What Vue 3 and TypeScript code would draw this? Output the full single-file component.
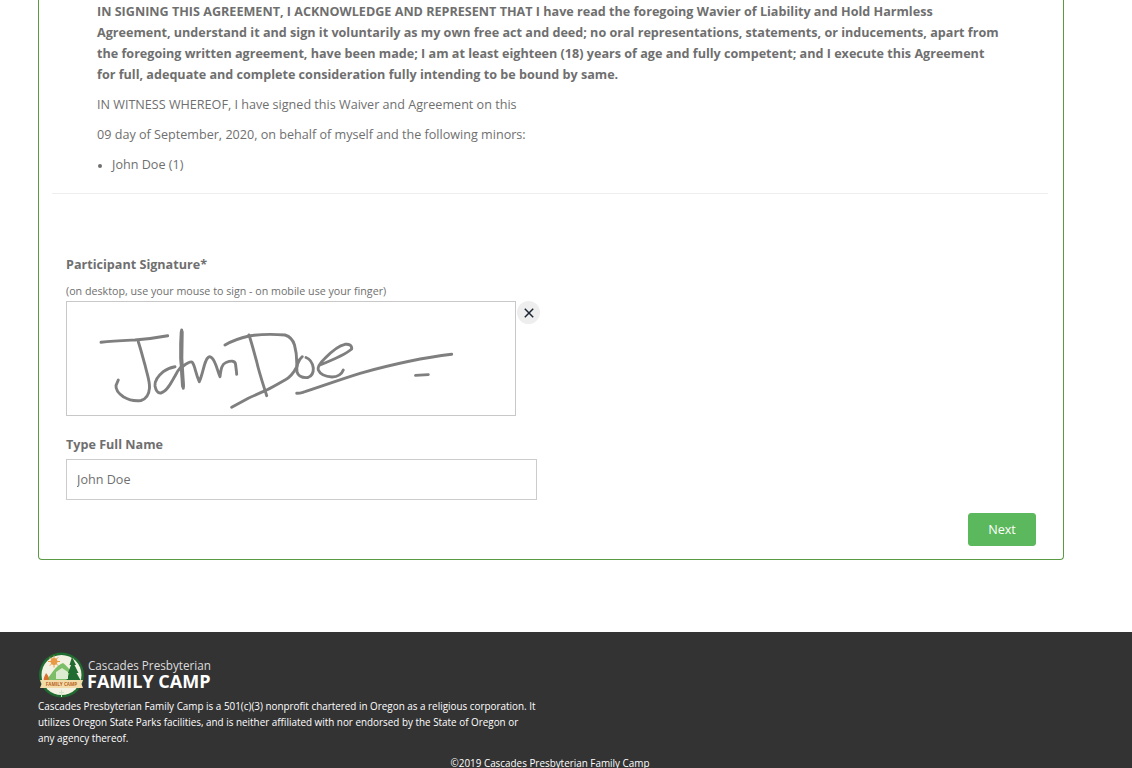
<script setup lang="ts">
// signature strokes, in page-ish coordinates (viewBox starts at the pad's corner)
const signatureStrokes = [
  'M101 342.3C113 341 125 340.5 135 340C147 339 158 337.5 167.7 335.7',
  'M138.3 341.7C141 350 143 358 145 365C147 374 150 381 149.5 388C149 395 146 399 141 400.5C134 401.5 128 399.5 123.3 396.7C118 393 115.5 390 116 385.5L118.3 380',
  'M175 366.7C170 367.5 166 369.5 163.3 371.7C158 376 154.5 381 155 386C156 391 158 393.5 161 393C167 391.5 171 383 175 376C177 372 179 369 181 367',
  'M181.7 330C180.5 342 180.5 350 181 358C181.5 368 182.5 378 183.3 388.3',
  'M182.3 366.7C186 364 189.5 361 192 362C195 365 195 372 199.3 381.7C202 376 204 365 205.5 362C207 357 209.5 355.5 212 358C216 362 217 370 220 376.7C221 368 222 364 226 362.5C231 360.5 235 360.5 235.5 364C236 368 236.5 371 236.7 374.3',
  'M225 345C231 341.5 240 338 249 336C258 334.5 272 334 285 335C290 336.5 293 340 294.5 345C296.5 352 297 360 296.7 367C293 374 289 378 285 380C278 384 272 387.5 266.7 390C260 393 254 395.5 248.3 398.3L231.7 407.3',
  'M249 335C252 344 254 352 256.7 361.7C259 372 263 384 266.7 395.7',
  'M302.3 356.7C298 360 296 367 297 372C298.5 376.5 303 378 308 377.5C312 376 313.5 372 313.3 368C312.5 363 310 359 306 357.5',
  'M320 365C330 361 345 355 351.7 349C352 345 349 343.8 345 344.3C339 345.5 331 352 325 358.3C320 363 317.5 367 318.3 370C320 374 326 376.5 332 377C338 377 342 373.5 343.3 370',
  'M296.7 393.3C300 393.5 302 392.5 305 391.7C322 386 340 379.5 360 373.3C390 365 420 358 451.7 354.3',
  'M415.5 375.4L428.3 374.6',
]
</script>

<template>
  <div class="page">
    <main class="content">
      <section class="card">
        <div class="agreement">
          <p class="strong">IN SIGNING THIS AGREEMENT, I ACKNOWLEDGE AND REPRESENT THAT I have read the foregoing Wavier of Liability and Hold Harmless Agreement, understand it and sign it voluntarily as my own free act and deed; no oral representations, statements, or inducements, apart from the foregoing written agreement, have been made; I am at least eighteen (18) years of age and fully competent; and I execute this Agreement for full, adequate and complete consideration fully intending to be bound by same.</p>
          <p>IN WITNESS WHEREOF, I have signed this Waiver and Agreement on this</p>
          <p>09 day of September, 2020, on behalf of myself and the following minors:</p>
          <ul>
            <li>John Doe (1)</li>
          </ul>
        </div>
        <hr />
        <form class="sign" @submit.prevent>
          <label class="label">Participant Signature*</label>
          <small class="hint">(on desktop, use your mouse to sign - on mobile use your finger)</small>
          <div class="pad-row">
            <div class="pad">
              <svg viewBox="67 302 448 113" fill="none" stroke="#7f7f7f" stroke-width="2.9" stroke-linecap="round" stroke-linejoin="round">
                <path v-for="d in signatureStrokes" :key="d" :d="d" />
                <path d="M181.7 332L181.3 358L183 386" stroke-width="4" />
              </svg>
            </div>
            <button class="clear" type="button" aria-label="Clear signature">
              <svg viewBox="0 0 10 10" width="10" height="10" stroke="#1c2733" stroke-width="1.5" fill="none">
                <path d="M0.8 0.8L9.2 9.2M9.2 0.8L0.8 9.2" />
              </svg>
            </button>
          </div>
          <label class="label name-label">Type Full Name</label>
          <input class="name" type="text" value="John Doe" />
          <div class="actions">
            <button class="next" type="submit">Next</button>
          </div>
        </form>
      </section>
    </main>
    <footer class="footer">
      <div class="brand">
        <svg class="logo" viewBox="0 0 46 46">
          <circle cx="22.5" cy="23" r="22.5" fill="#1f6b30" />
          <circle cx="22.5" cy="23" r="20" fill="#f3f1e2" />
          <g fill="#e99a45">
            <circle cx="15" cy="9.5" r="3.4" />
            <path d="M15 3.5V15.5M9 9.5H21M10.8 5.3L19.2 13.7M19.2 5.3L10.8 13.7" stroke="#e99a45" stroke-width="1" />
          </g>
          <path d="M6 30C11 24 17 13 24 11C29 14 35 24 40 30Z" fill="#7cbd68" />
          <path d="M33 5L37 13H35.5L39.5 21H37.5L42 29H27L30.5 21H29L32 13H30.5Z" fill="#1f6b30" />
          <path d="M7 21C9.5 24 10.5 26 9.5 29H5C4 26 6 24 7 21Z" fill="#d9702c" />
          <path d="M17 27V20L23 16L29 20V27Z" fill="#dcebcf" />
          <path d="M1 28H44L42.5 32L44 36H1L2.5 32Z" fill="#f3dca9" />
          <text class="banner" x="22.5" y="34.2" text-anchor="middle">FAMILY CAMP</text>
          <path d="M22 38H23V45H22ZM20 40H25V41H20Z" fill="#cfe3c5" />
        </svg>
        <div class="brand-text">
          <span class="brand-top">Cascades Presbyterian</span>
          <span class="brand-main">FAMILY CAMP</span>
        </div>
      </div>
      <p class="legal">Cascades Presbyterian Family Camp is a 501(c)(3) nonprofit chartered in Oregon as a religious corporation. It utilizes Oregon State Parks facilities, and is neither affiliated with nor endorsed by the State of Oregon or any agency thereof.</p>
      <p class="copy">©2019 Cascades Presbyterian Family Camp</p>
    </footer>
  </div>
</template>

<style scoped>
.page {
  height: 768px;
  overflow: hidden;
  font-family: "Open Sans", sans-serif;
  font-size: 12.6px;
  color: #6f6f6f;
  background: #fff;
}

.content {
  height: 632px;
  padding: 0 68px 0 38px;
  box-sizing: border-box;
}

.card {
  height: 560px;
  border: 1px solid #5b9a45;
  border-top: none;
  border-radius: 0 0 4px 4px;
  box-sizing: border-box;
  padding: 0 15px 0 13px;
}

.agreement {
  padding: 1px 46px 0 45px;
}

.agreement p {
  margin: 0 0 9px;
  line-height: 21px;
}

.agreement .strong {
  font-weight: 700;
}

.agreement ul {
  margin: 0;
  padding-left: 15px;
  line-height: 21px;
}

.agreement li::marker {
  font-size: 10px;
}

hr {
  margin: 18px 0 0;
  border: none;
  border-top: 1px solid #eee;
}

.sign {
  display: flex;
  flex-direction: column;
  align-items: flex-start;
  padding: 60px 12px 0 14px;
}

.label {
  font-weight: 700;
  line-height: 21px;
}

.hint {
  margin-top: 9px;
  font-size: 10.7px;
  line-height: 15px;
}

.pad-row {
  display: flex;
  align-items: flex-start;
  gap: 1px;
  margin-top: 2px;
}

.pad {
  width: 450px;
  height: 115px;
  border: 1px solid #c8c8c8;
  box-sizing: border-box;
}

.pad svg {
  display: block;
  width: 100%;
  height: 100%;
}

.clear {
  display: flex;
  align-items: center;
  justify-content: center;
  width: 23px;
  height: 23px;
  padding: 0;
  border: none;
  border-radius: 50%;
  background: #eee;
}

.name-label {
  margin-top: 18px;
}

.name {
  width: 471px;
  height: 41px;
  margin-top: 4px;
  padding: 0 10px;
  border: 1px solid #ccc;
  box-sizing: border-box;
  font: inherit;
  color: #6f6f6f;
  outline: none;
}

.actions {
  display: flex;
  justify-content: flex-end;
  align-self: stretch;
  margin-top: 13px;
}

.next {
  width: 68px;
  height: 33px;
  border: 1px solid #5cb85c;
  border-radius: 3px;
  background: #5cb85c;
  color: #fff;
  font: inherit;
}

.footer {
  height: 136px;
  padding: 20px 70px 0 38px;
  box-sizing: border-box;
  background: #333;
  color: #fff;
  font-size: 9.88px;
  line-height: 16px;
}

.brand {
  display: flex;
  align-items: center;
  gap: 2px;
  height: 46px;
}

.logo {
  width: 46px;
  height: 46px;
  margin-left: 1px;
}

.banner {
  font-size: 4.6px;
  font-weight: 700;
  fill: #b8621f;
}

.brand-text {
  display: flex;
  flex-direction: column;
  color: #dcdcdc;
}

.brand-top {
  margin-left: 1px;
  font-size: 11.7px;
  line-height: 13px;
}

.brand-main {
  font-size: 18px;
  line-height: 19px;
  font-weight: 700;
  color: #fff;
}

.legal {
  width: 498.5px;
  margin: 0;
}

.copy {
  margin: 9px 0 0;
  text-align: center;
}
</style>

<style>
html,
body {
  margin: 0;
  overflow: hidden;
}
</style>
